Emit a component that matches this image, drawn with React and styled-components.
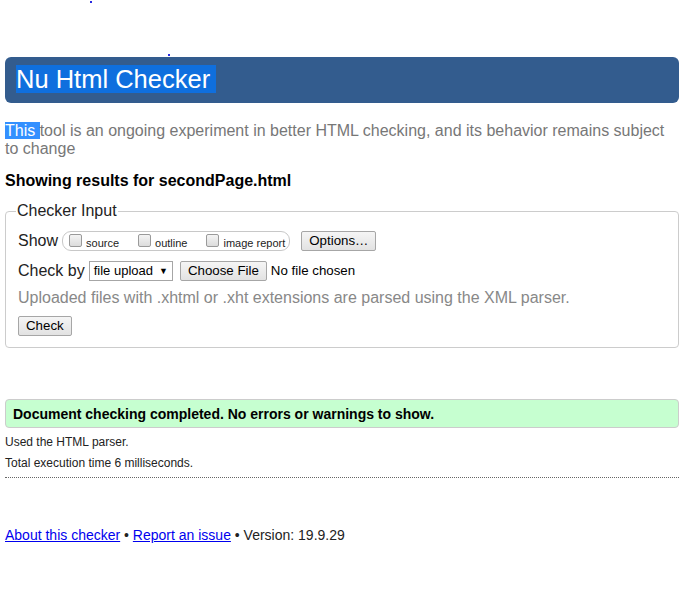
import React from "react";
import styled, { createGlobalStyle } from "styled-components";

const GlobalStyle = createGlobalStyle`
  html, body {
    margin: 0;
    padding: 0;
    background: #fff;
  }
  body {
    font-family: "Liberation Sans", Arial, sans-serif;
    color: #000;
  }
`;

const Page = styled.div`
  width: 674px;
  padding: 57px 5px 40px;
  position: relative;
`;

const Dot = styled.span`
  position: absolute;
  width: 2px;
  height: 2px;
  background: #2a2ae0;
  left: ${(p) => p.x}px;
  top: ${(p) => p.y}px;
`;

const Header = styled.h1`
  margin: 0;
  height: 46px;
  box-sizing: border-box;
  padding: 8px 11px 0;
  background: #335c8e;
  border-radius: 6px;
  font-size: 25.5px;
  font-weight: normal;
  line-height: 28px;
  color: #fff;
`;

const Selected = styled.span`
  background: ${(p) => (p.light ? "#3390ff" : "#0f6fde")};
  color: #fff;
  padding-right: ${(p) => p.pad || 0}px;
`;

const Intro = styled.p`
  margin: 19px 0 0;
  font-size: 16px;
  line-height: 18px;
  color: #777;
`;

const Results = styled.h2`
  margin: 14px 0 0;
  font-size: 16px;
  line-height: 18px;
  font-weight: bold;
`;

const Fieldset = styled.fieldset`
  margin: 12px 0 0;
  padding: 2px 12px 11px;
  border: 1px solid #ccc;
  border-radius: 4px;
`;

const Legend = styled.legend`
  padding: 0 1px;
  margin-left: -2px;
  font-size: 16px;
  line-height: 18px;
  color: #222;
`;

const Row = styled.div`
  display: flex;
  align-items: center;
  gap: ${(p) => p.gap || 4}px;
  margin-top: ${(p) => p.top || 0}px;
  font-size: 16px;
  line-height: 18px;
  color: #222;
`;

const Pill = styled.span`
  display: inline-flex;
  align-items: center;
  height: 18px;
  padding: 0 4px 0 6px;
  border: 1px solid #c8c8c8;
  border-radius: 9px;
`;

const Option = styled.label`
  display: inline-flex;
  align-items: flex-end;
  font-size: 11px;
  line-height: 12px;
  color: #222;
  margin-right: ${(p) => p.mr || 0}px;
`;

const Box = styled.span`
  display: inline-block;
  width: 11px;
  height: 11px;
  border: 1px solid #9a9a9a;
  border-radius: 2px;
  background: linear-gradient(#f4f4f4, #dcdcdc);
  margin: 0 4px 2px 0;
`;

const Button = styled.button`
  font-family: "Liberation Sans", Arial, sans-serif;
  font-size: 13.3px;
  line-height: 15px;
  padding: 1px 7px 2px;
  height: ${(p) => p.h || 20}px;
  border: 1px solid #a6a6a6;
  border-radius: 2px;
  background: linear-gradient(#f5f5f5, #e2e2e2);
  color: #000;
  margin-left: ${(p) => p.ml || 0}px;
`;

const Select = styled.span`
  display: inline-flex;
  align-items: center;
  height: 18px;
  padding: 0 4px;
  border: 1px solid #a6a6a6;
  font-size: 13px;
  background: #fff;
  color: #000;
  gap: 6px;
`;

const Caret = styled.span`
  font-size: 9px;
`;

const NoFile = styled.span`
  font-size: 13.3px;
  color: #000;
`;

const Hint = styled.p`
  margin: 8px 0 0;
  font-size: 16px;
  line-height: 18px;
  color: #888;
`;

const Success = styled.div`
  margin-top: 51px;
  height: 29px;
  box-sizing: border-box;
  padding: 6px 7px;
  border: 1px solid #ccc;
  border-radius: 4px;
  background: #c6ffd0;
  font-size: 14px;
  line-height: 16px;
  font-weight: bold;
`;

const Note = styled.p`
  margin: ${(p) => p.top || 0}px 0 0;
  font-size: 12px;
  line-height: 14px;
  color: #222;
`;

const Rule = styled.hr`
  margin: 7px 0 0;
  border: 0;
  border-top: 1px dotted #666;
`;

const Footer = styled.p`
  margin: 49px 0 0;
  font-size: 14px;
  line-height: 16px;
  color: #222;
`;

const A = styled.a`
  color: #0000ee;
  text-decoration: underline;
`;

export default function App() {
  return (
    <>
      <GlobalStyle />
      <Page>
        <Dot x={90} y={1} />
        <Dot x={168} y={54} />
        <Header>
          <Selected pad={6}>Nu Html Checker</Selected>
        </Header>
        <Intro>
          <Selected light>This </Selected>tool is an ongoing experiment in better
          HTML checking, and its behavior remains subject to change
        </Intro>
        <Results>Showing results for secondPage.html</Results>
        <Fieldset>
          <Legend>Checker Input</Legend>
          <Row top={9} gap={4}>
            <span>Show</span>
            <Pill>
              <Option mr={19}>
                <Box />
                source
              </Option>
              <Option mr={19}>
                <Box />
                outline
              </Option>
              <Option>
                <Box />
                image report
              </Option>
            </Pill>
            <Button ml={7}>Options…</Button>
          </Row>
          <Row top={10} gap={4}>
            <span>Check by</span>
            <Select>
              file upload <Caret>▼</Caret>
            </Select>
            <Button ml={3}>Choose File</Button>
            <NoFile>No file chosen</NoFile>
          </Row>
          <Hint>Uploaded files with .xhtml or .xht extensions are parsed using the XML parser.</Hint>
          <Row top={9}>
            <Button>Check</Button>
          </Row>
        </Fieldset>
        <Success>Document checking completed. No errors or warnings to show.</Success>
        <Note top={7}>Used the HTML parser.</Note>
        <Note top={7}>Total execution time 6 milliseconds.</Note>
        <Rule />
        <Footer>
          <A href="#">About this checker</A> • <A href="#">Report an issue</A> •
          Version: 19.9.29
        </Footer>
      </Page>
    </>
  );
}
